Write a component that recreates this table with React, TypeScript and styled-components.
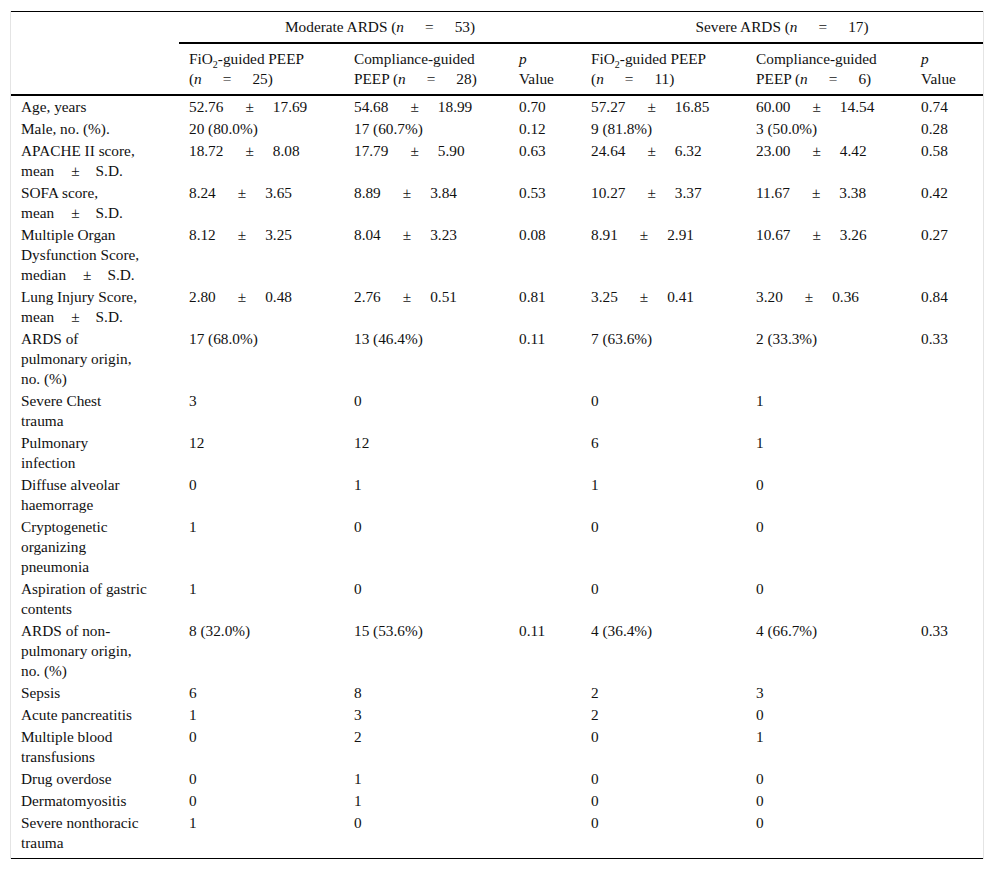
import React from "react";
import styled, { createGlobalStyle } from "styled-components";

const GlobalStyle = createGlobalStyle`
  body {
    margin: 0;
    background: #fff;
  }
`;

const Page = styled.div`
  padding: 11px 10px 12px 10px;
  font-family: "Liberation Serif", "Times New Roman", serif;
  font-size: 15.3px;
  line-height: 20px;
  color: #111;
`;

const Frame = styled.div`
  width: 972px;
  border-left: 1px solid #e4e4e4;
  border-right: 1px solid #e4e4e4;
`;

const Table = styled.table`
  width: 972px;
  border-collapse: collapse;
  table-layout: fixed;
  border-top: 1px solid #000;
  border-bottom: 1px solid #000;
`;

const Col = styled.col<{ $w: number }>`
  width: ${(p) => p.$w}px;
`;

const Corner = styled.th`
  border-bottom: 2px solid #000;
  padding: 0;
`;

const GroupTh = styled.th`
  font-weight: normal;
  text-align: center;
  padding: 5px 10px;
  border-bottom: 2px solid #000;
`;

const ColTh = styled.th`
  font-weight: normal;
  text-align: left;
  vertical-align: top;
  padding: 5px 10px;
  border-bottom: 2px solid #000;
  white-space: nowrap;
`;

const Tbody = styled.tbody`
  tr:last-child td {
    padding-bottom: 5px;
  }
`;

const Td = styled.td`
  vertical-align: top;
  padding: 1px 10px;
  white-space: nowrap;
`;

const Sub = styled.sub`
  font-size: 10px;
  line-height: 0;
  vertical-align: -4px;
`;

// spacing around the ± sign; labels sit a bit tighter than the figures
const Pm = styled.span<{ $label?: boolean }>`
  padding: ${(p) => (p.$label ? "0 16px 0 17px" : "0 19px 0 22px")};
`;

const Eq = styled.span`
  padding: 0 21px;
`;

const pm = (a: string, b: string, label = false) => (
  <>
    {a}
    <Pm $label={label}>±</Pm>
    {b}
  </>
);

const sd = (a: string) => pm(a, "S.D.", true);

const nEq = (v: number) => (
  <>
    <i>n</i>
    <Eq>=</Eq>
    {v}
  </>
);

type Row = { label: React.ReactNode[]; cells: React.ReactNode[] };

const rows: Row[] = [
  { label: ["Age, years"], cells: [pm("52.76", "17.69"), pm("54.68", "18.99"), "0.70", pm("57.27", "16.85"), pm("60.00", "14.54"), "0.74"] },
  { label: ["Male, no. (%)."], cells: ["20 (80.0%)", "17 (60.7%)", "0.12", "9 (81.8%)", "3 (50.0%)", "0.28"] },
  { label: ["APACHE II score,", sd("mean")], cells: [pm("18.72", "8.08"), pm("17.79", "5.90"), "0.63", pm("24.64", "6.32"), pm("23.00", "4.42"), "0.58"] },
  { label: ["SOFA score,", sd("mean")], cells: [pm("8.24", "3.65"), pm("8.89", "3.84"), "0.53", pm("10.27", "3.37"), pm("11.67", "3.38"), "0.42"] },
  { label: ["Multiple Organ", "Dysfunction Score,", sd("median")], cells: [pm("8.12", "3.25"), pm("8.04", "3.23"), "0.08", pm("8.91", "2.91"), pm("10.67", "3.26"), "0.27"] },
  { label: ["Lung Injury Score,", sd("mean")], cells: [pm("2.80", "0.48"), pm("2.76", "0.51"), "0.81", pm("3.25", "0.41"), pm("3.20", "0.36"), "0.84"] },
  { label: ["ARDS of", "pulmonary origin,", "no. (%)"], cells: ["17 (68.0%)", "13 (46.4%)", "0.11", "7 (63.6%)", "2 (33.3%)", "0.33"] },
  { label: ["Severe Chest", "trauma"], cells: ["3", "0", "", "0", "1", ""] },
  { label: ["Pulmonary", "infection"], cells: ["12", "12", "", "6", "1", ""] },
  { label: ["Diffuse alveolar", "haemorrage"], cells: ["0", "1", "", "1", "0", ""] },
  { label: ["Cryptogenetic", "organizing", "pneumonia"], cells: ["1", "0", "", "0", "0", ""] },
  { label: ["Aspiration of gastric", "contents"], cells: ["1", "0", "", "0", "0", ""] },
  { label: ["ARDS of non-", "pulmonary origin,", "no. (%)"], cells: ["8 (32.0%)", "15 (53.6%)", "0.11", "4 (36.4%)", "4 (66.7%)", "0.33"] },
  { label: ["Sepsis"], cells: ["6", "8", "", "2", "3", ""] },
  { label: ["Acute pancreatitis"], cells: ["1", "3", "", "2", "0", ""] },
  { label: ["Multiple blood", "transfusions"], cells: ["0", "2", "", "0", "1", ""] },
  { label: ["Drug overdose"], cells: ["0", "1", "", "0", "0", ""] },
  { label: ["Dermatomyositis"], cells: ["0", "1", "", "0", "0", ""] },
  { label: ["Severe nonthoracic", "trauma"], cells: ["1", "0", "", "0", "0", ""] },
];

const lines = (parts: React.ReactNode[]) =>
  parts.map((p, i) => (
    <React.Fragment key={i}>
      {i > 0 && <br />}
      {p}
    </React.Fragment>
  ));

const widths = [168, 165, 165, 72, 165, 165, 72];

const GroupHeads = ({ n }: { n: number[] }) => (
  <>
    <ColTh>
      FiO<Sub>2</Sub>-guided PEEP
      <br />({nEq(n[0])})
    </ColTh>
    <ColTh>
      Compliance-guided
      <br />
      PEEP ({nEq(n[1])})
    </ColTh>
    <ColTh>
      <i>p</i>
      <br />
      Value
    </ColTh>
  </>
);

const App = () => {
  return (
    <Page>
      <GlobalStyle />
      <Frame>
        <Table>
          <colgroup>
            {widths.map((w, i) => (
              <Col key={i} $w={w} />
            ))}
          </colgroup>
          <thead>
            <tr>
              <Corner rowSpan={2} />
              <GroupTh colSpan={3}>Moderate ARDS ({nEq(53)})</GroupTh>
              <GroupTh colSpan={3}>Severe ARDS ({nEq(17)})</GroupTh>
            </tr>
            <tr>
              <GroupHeads n={[25, 28]} />
              <GroupHeads n={[11, 6]} />
            </tr>
          </thead>
          <Tbody>
            {rows.map((r, i) => (
              <tr key={i}>
                <Td>{lines(r.label)}</Td>
                {r.cells.map((c, j) => (
                  <Td key={j}>{c}</Td>
                ))}
              </tr>
            ))}
          </Tbody>
        </Table>
      </Frame>
    </Page>
  );
};

export default App;
